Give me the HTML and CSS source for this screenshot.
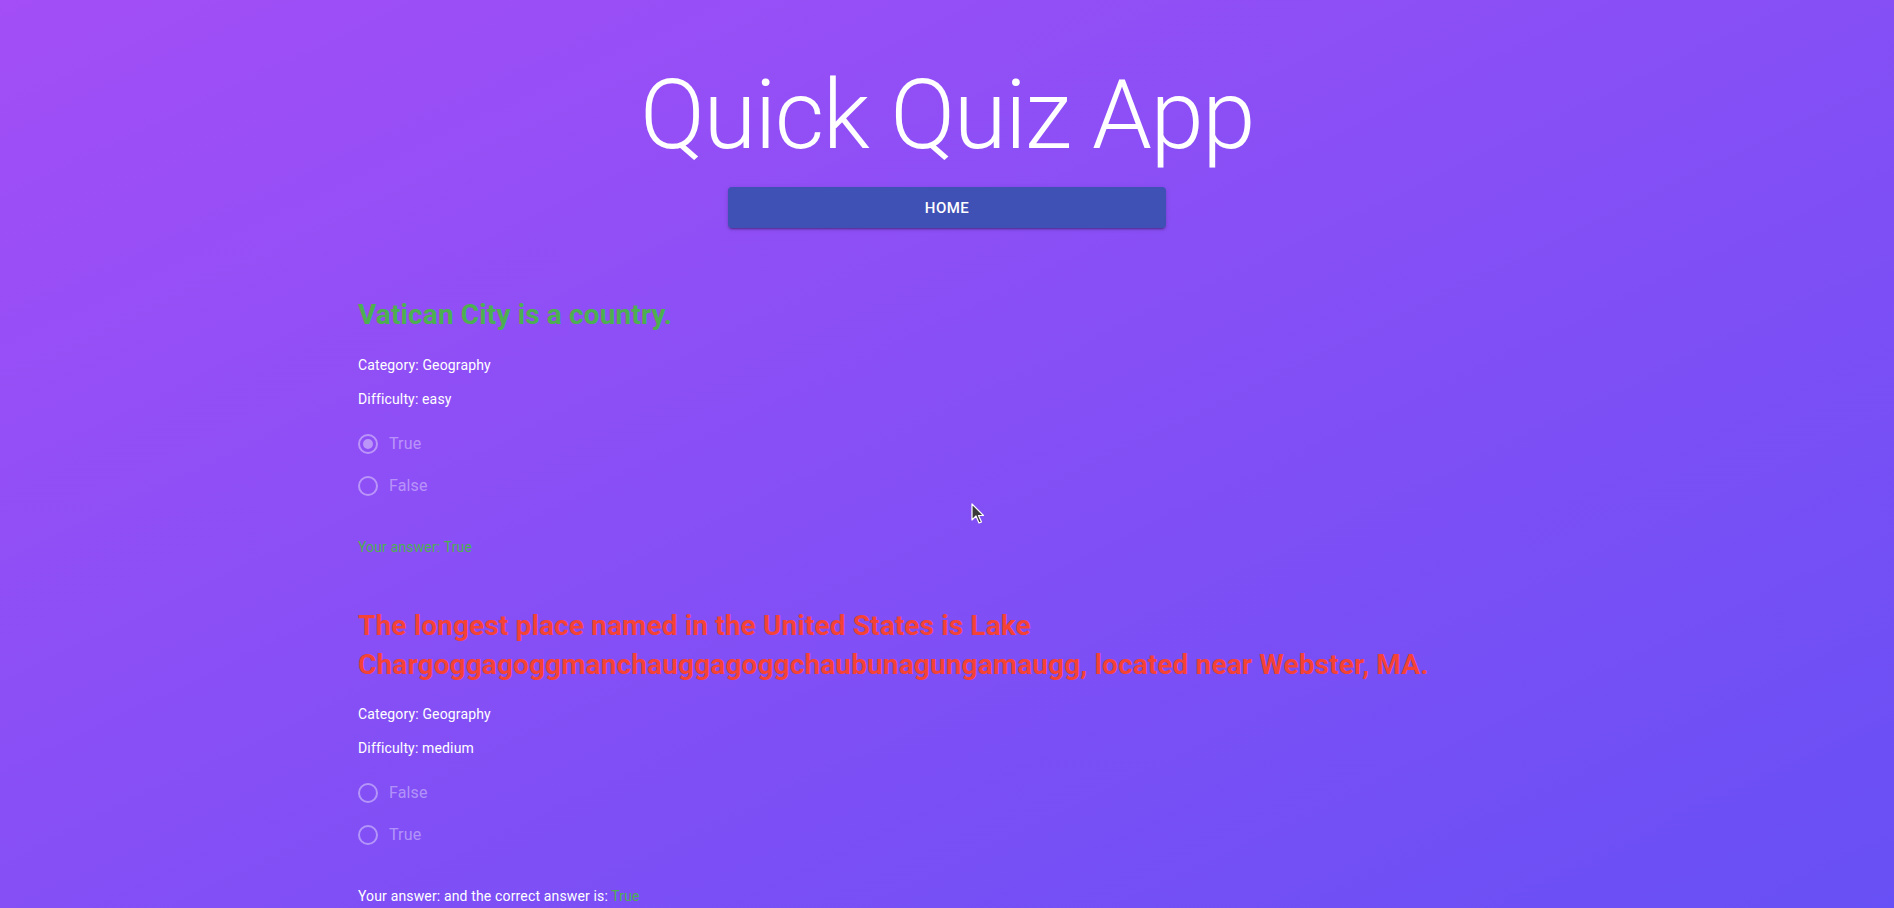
FILE: index.html
```html
<!DOCTYPE html>
<html lang="en">
<head>
<meta charset="utf-8">
<title>Quick Quiz App</title>
<link rel="stylesheet" href="styles.css">
</head>
<body>
<div class="page">
  <header class="header">
    <h1 class="title">Quick Quiz App</h1>
    <button class="home-btn" type="button">Home</button>
  </header>

  <main class="quiz">
    <section class="question">
      <h2 class="q-text correct">Vatican City is a country.</h2>
      <p class="meta">Category: Geography</p>
      <p class="meta">Difficulty: easy</p>
      <div class="options">
        <label class="option">
          <span class="radio checked"><svg viewBox="0 0 24 24" width="24" height="24"><circle cx="12" cy="12" r="9" fill="none" stroke="currentColor" stroke-width="2"/><circle cx="12" cy="12" r="5" fill="currentColor"/></svg></span>
          <span class="option-label">True</span>
        </label>
        <label class="option">
          <span class="radio"><svg viewBox="0 0 24 24" width="24" height="24"><circle cx="12" cy="12" r="9" fill="none" stroke="currentColor" stroke-width="2"/></svg></span>
          <span class="option-label">False</span>
        </label>
      </div>
      <p class="answer correct-text">Your answer: True</p>
    </section>

    <section class="question">
      <h2 class="q-text wrong">The longest place named in the United States is Lake Chargoggagoggmanchauggagoggchaubunagungamaugg, located near Webster, MA.</h2>
      <p class="meta">Category: Geography</p>
      <p class="meta">Difficulty: medium</p>
      <div class="options">
        <label class="option">
          <span class="radio"><svg viewBox="0 0 24 24" width="24" height="24"><circle cx="12" cy="12" r="9" fill="none" stroke="currentColor" stroke-width="2"/></svg></span>
          <span class="option-label">False</span>
        </label>
        <label class="option">
          <span class="radio"><svg viewBox="0 0 24 24" width="24" height="24"><circle cx="12" cy="12" r="9" fill="none" stroke="currentColor" stroke-width="2"/></svg></span>
          <span class="option-label">True</span>
        </label>
      </div>
      <p class="answer">Your answer: and the correct answer is: <span class="correct-text">True</span></p>
    </section>
  </main>

  <svg class="cursor" width="14" height="22" viewBox="0 0 14 22"><path d="M1 1 L1 17 L5 13 L8 20 L10.5 19 L7.5 12.5 L12.5 12.5 Z" fill="#3a3a3a" stroke="#ffffff" stroke-width="1.2" stroke-linejoin="round"/></svg>
</div>
</body>
</html>
```

FILE: styles.css
```css
html {
  min-height: 100%;
  background: linear-gradient(to bottom right, #a34ef6, #6750f5);
  background-attachment: fixed;
}

body {
  margin: 0;
  font-family: Roboto, "Noto Sans", "Liberation Sans", sans-serif;
  color: #ffffff;
}

.page {
  position: relative;
  min-height: 100vh;
  padding-top: 59px;
  box-sizing: border-box;
}

.header {
  display: flex;
  flex-direction: column;
  align-items: center;
}

.title {
  margin: 0;
  font-size: 96px;
  font-weight: 300;
  line-height: 112px;
  letter-spacing: -1.5px;
  color: #ffffff;
}

.home-btn {
  margin-top: 16px;
  width: 438px;
  height: 41px;
  border: none;
  border-radius: 4px;
  background: #3f51b5;
  color: #ffffff;
  font-family: Roboto, "Noto Sans", sans-serif;
  font-size: 15px;
  font-weight: 500;
  letter-spacing: 0.43px;
  text-transform: uppercase;
  box-shadow: 0 3px 1px -2px rgba(0,0,0,0.2), 0 2px 2px 0 rgba(0,0,0,0.14), 0 1px 5px 0 rgba(0,0,0,0.12);
  cursor: pointer;
}

.quiz {
  max-width: 1178px;
  margin: 68px auto 0;
  display: flex;
  flex-direction: column;
  gap: 50px;
  padding-bottom: 40px;
}

.question {
  display: flex;
  flex-direction: column;
  align-items: flex-start;
}

.q-text {
  margin: 0 0 20px;
  font-size: 28px;
  font-weight: 700;
  line-height: 38.8px;
  letter-spacing: 0.13px;
}

.correct { color: #4caf50; }
.wrong { color: #f44336; }

.meta {
  margin: 0 0 14px;
  font-size: 14px;
  line-height: 20px;
  letter-spacing: 0.15px;
}

.options {
  display: flex;
  flex-direction: column;
  margin-bottom: 30px;
}

.option {
  display: flex;
  align-items: center;
  margin-left: -11px;
  height: 42px;
  color: rgba(255,255,255,0.4);
}

.radio {
  display: flex;
  padding: 9px;
}

.option-label {
  font-size: 16px;
  line-height: 24px;
  letter-spacing: 0.15px;
}

.answer {
  margin: 0;
  font-size: 14px;
  line-height: 20px;
  letter-spacing: 0.15px;
}

.correct-text { color: #4caf50; }

.cursor {
  position: absolute;
  left: 971px;
  top: 503px;
}
```
